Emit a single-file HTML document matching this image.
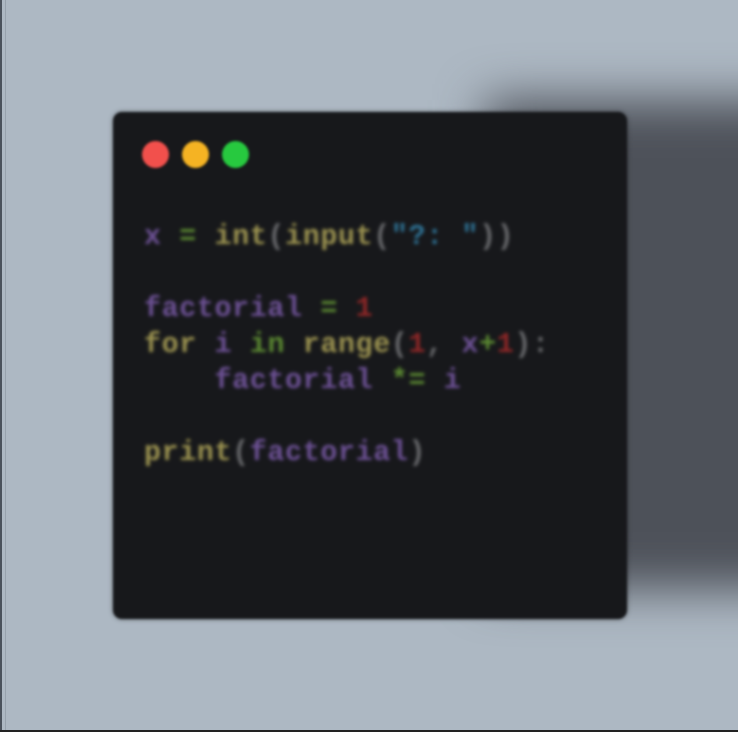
<!DOCTYPE html>
<html><head><meta charset="utf-8"><style>
html,body{margin:0;padding:0}
body{width:738px;height:732px;background:#adb8c3;position:relative;overflow:hidden}
.l1{position:absolute;left:0;top:0;width:2px;height:732px;background:#4a525c}
.l2{position:absolute;left:5px;top:0;width:1px;height:732px;background:#97a2ad}
.bt{position:absolute;left:0;bottom:0;width:738px;height:2px;background:#222}
.sh{position:absolute;left:485px;top:100px;width:320px;height:490px;background:#4d5159;filter:blur(24px)}
.win{position:absolute;left:113px;top:112px;width:514px;height:507px;background:#17181b;border-radius:9px;box-shadow:0 0 4px rgba(0,0,0,.5);filter:blur(1.3px)}
.dot{position:absolute;top:29px;width:27px;height:27px;border-radius:50%}
pre{position:absolute;left:31px;top:107px;margin:0;font-family:"Liberation Mono",monospace;font-size:28.3px;letter-spacing:0.65px;line-height:36px;font-weight:bold;color:#777;filter:blur(1.4px)}
.p{color:#6e5296}.g{color:#5c8a32}.y{color:#9d9451}.b{color:#2f7396}.r{color:#8e2727}.o{color:#6a6b6e}
</style></head><body>
<div class="l1"></div><div class="l2"></div><div class="bt"></div>
<div class="sh"></div>
<div class="win">
<div class="dot" style="left:29px;background:#f2504c"></div>
<div class="dot" style="left:69px;background:#f5b323"></div>
<div class="dot" style="left:109px;background:#27c93f"></div>
<pre><span class="p">x</span> <span class="g">=</span> <span class="y">int</span><span class="o">(</span><span class="y">input</span><span class="o">(</span><span class="b">"?: "</span><span class="o">))</span>

<span class="p">factorial</span> <span class="g">=</span> <span class="r">1</span>
<span class="y">for</span> <span class="p">i</span> <span class="g">in</span> <span class="y">range</span><span class="o">(</span><span class="r">1</span><span class="o">,</span> <span class="p">x</span><span class="g">+</span><span class="r">1</span><span class="o">):</span>
    <span class="p">factorial</span> <span class="g">*=</span> <span class="p">i</span>

<span class="y">print</span><span class="o">(</span><span class="p">factorial</span><span class="o">)</span></pre>
</div>
</body></html>
